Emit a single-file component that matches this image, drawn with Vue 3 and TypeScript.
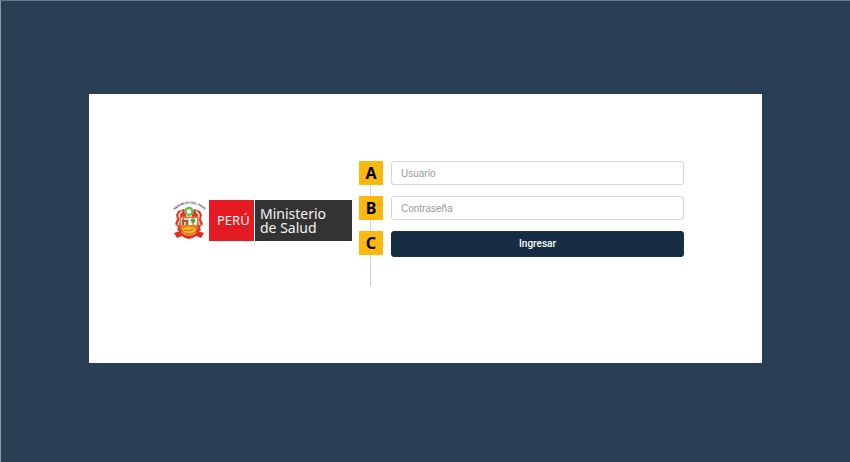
<script setup lang="ts">
import { ref } from 'vue'

const user = ref('')
const password = ref('')
</script>

<template>
  <main class="page">
    <section class="panel">
      <svg class="logo" viewBox="0 0 178 41" role="img" aria-label="PERÚ Ministerio de Salud">
        <defs>
          <path id="crest-arc" d="M0.500 10Q15 -3 31 10" />
        </defs>
        <text class="crest-text"><textPath href="#crest-arc">REPÚBLICA DEL PERÚ</textPath></text>
        <!-- flags -->
        <path d="M10 9L4 11L2 15L3 19L1 24L4 27L3 30L9 34L12 29V12Z" fill="#e2382c" />
        <path d="M20 9L26 11L28 15L27 19L29 24L26 27L27 30L21 34L18 29V12Z" fill="#e2382c" />
        <path d="M8 11L5 15L6 20L4 25M22 11L25 15L24 20L26 25" fill="none" stroke="#fbe9e0" stroke-width="1.500" />
        <!-- wreath -->
        <circle cx="15" cy="11.500" r="3.500" fill="#fff" stroke="#70bd55" stroke-width="2.500" />
        <!-- shield -->
        <path d="M6 17H24V26Q23 33 15 35Q7 33 6 26Z" fill="#ee7a24" stroke="#d8702c" />
        <path d="M7 18H15V25H7Z" fill="#b3dccd" />
        <path d="M15 18H23V25H15Z" fill="#eff3d9" />
        <path d="M8 25V20H9V18H10V20H14V25H12V22H10V25Z" fill="#b8502d" />
        <circle cx="19" cy="20.500" r="2.300" fill="#58a94b" />
        <path d="M18.500 21H19.500V25H18.500Z" fill="#8b5a2e" />
        <path d="M8 29Q14 25 21 28Q23 30 20 32Q15 34 10 32Z" fill="#f8bd25" />
        <path d="M10 30Q15 32 20 29" stroke="#d16522" fill="none" />
        <!-- ribbon -->
        <path d="M0 33L6 31Q15 39 24 31L30 33L27 38L22 36Q15 42 8 36L3 38Z" fill="#df2d28" />
        <path d="M7 32Q15 39 23 32" fill="none" stroke="#f2a329" stroke-width="1" />
        <rect x="35" width="45" height="41" fill="#e51b23" />
        <rect x="81" width="97" height="41" fill="#333" />
        <text class="logo-text peru" x="43" y="25">PERÚ</text>
        <text class="logo-text" x="86" y="19">Ministerio</text>
        <text class="logo-text" x="86" y="33">de Salud</text>
      </svg>
      <form class="login" @submit.prevent>
        <div class="row">
          <span class="badge">A</span>
          <input v-model="user" class="field" type="text" placeholder="Usuario" aria-label="Usuario" />
        </div>
        <div class="row">
          <span class="badge">B</span>
          <input v-model="password" class="field" type="password" placeholder="Contraseña" aria-label="Contraseña" />
        </div>
        <div class="row">
          <span class="badge">C</span>
          <button class="submit" type="submit">Ingresar</button>
        </div>
      </form>
    </section>
  </main>
</template>

<style>
body {
  background: #2a3f54;
}
</style>

<style scoped>
.page {
  box-sizing: border-box;
  min-height: 100vh;
  padding-bottom: 6px;
  display: flex;
  align-items: center;
  justify-content: center;
  background: #2a3f54;
  border-top: 1px solid #66788a;
  border-left: 1px solid #8b98a5;
  font-family: "Liberation Sans", Arial, sans-serif;
}
.panel {
  box-sizing: border-box;
  width: calc(100% - 176px);
  padding: 67px 78px 77px 85px;
  display: flex;
  align-items: center;
  gap: 18px;
  background: #fff;
}
.logo {
  flex: none;
  width: 178px;
  height: 41px;
  margin-bottom: 6px;
  overflow: visible;
}
.logo-text {
  font-family: "Noto Sans", "Open Sans", sans-serif;
  font-size: 14px;
  fill: #f4f4f4;
}
.peru {
  font-size: 13px;
}
.crest-text {
  font-family: "Liberation Sans", Arial, sans-serif;
  font-size: 3px;
  font-weight: 700;
  fill: #333;
}
.login {
  box-sizing: border-box;
  flex: 1;
  min-width: 0;
  padding: 0 0 29px 20px;
  display: flex;
  flex-direction: column;
  gap: 11px;
  border-left: 1px solid #d3d3d3;
}
.row {
  position: relative;
  display: flex;
}
.badge {
  position: absolute;
  left: -32px;
  top: 0;
  width: 24px;
  height: 24px;
  background: #fbb80f;
  color: #000;
  font: 700 16px/24px "Noto Sans", "Open Sans", sans-serif;
  text-align: center;
}
.field,
.submit {
  box-sizing: border-box;
  width: 100%;
  margin: 0;
  border-radius: 3px;
  font: 10px/14px "Liberation Sans", Arial, sans-serif;
}
.field {
  height: 24px;
  padding: 0 9px;
  border: 1px solid #d5d5d5;
  background: #fff;
  color: #555;
}
.field::placeholder {
  color: #999;
  opacity: 1;
}
.submit {
  height: 26px;
  border: 1px solid #172d44;
  background: #172d44;
  color: #fff;
  font-family: Roboto, "Liberation Sans", sans-serif;
  font-weight: 500;
}
</style>
